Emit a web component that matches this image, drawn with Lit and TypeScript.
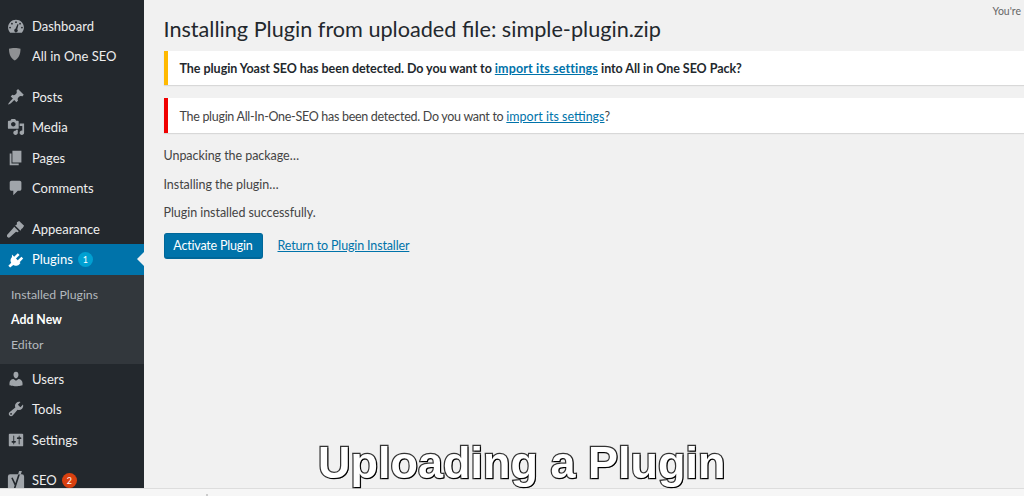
import { LitElement, html, css, svg } from "lit";
import { customElement } from "lit/decorators.js";

const icons: Record<string, any> = {
  dashboard: svg`<path fill-rule="evenodd" d="M3.500 17.500h13c1.400-1.500 2.300-3.600 2.300-5.800C18.800 6.800 14.900 3 10 3S1.200 6.800 1.200 11.700c0 2.200.9 4.300 2.300 5.800zM10 4.800a1 1 0 1 1 0 2 1 1 0 0 1 0-2zM5.500 6.400a1 1 0 1 1 0 2 1 1 0 0 1 0-2zM14.500 6.400a1 1 0 1 1 0 2 1 1 0 0 1 0-2zM3.400 10.800a1 1 0 1 1 0 2 1 1 0 0 1 0-2zM16.600 10.800a1 1 0 1 1 0 2 1 1 0 0 1 0-2zM11.800 7.800l1 .4-1.400 5.400a2 2 0 1 1-2-.5z"/>`,
  shield: svg`<path fill="#8f9193" d="M8.600 1c2.600 0 4.800.3 6.400 1 0 5.500-1.500 10.500-6.400 13C3.700 12.500 2.200 7.500 2.200 2c1.600-.7 3.800-1 6.400-1z"/>`,
  pin: svg`<path d="M10.440 3.020l1.820-1.820 6.360 6.350-1.830 1.820c-1.050-.68-2.480-.57-3.410.36l-.75.75c-.92.93-1.040 2.350-.35 3.410l-1.830 1.820-2.410-2.410-2.800 2.790c-.42.42-3.380 2.710-3.800 2.290s1.860-3.390 2.280-3.810l2.790-2.790L4.100 9.360l1.830-1.820c1.050.69 2.480.57 3.400-.36l.75-.75c.93-.92 1.050-2.350.36-3.410z"/>`,
  media: svg`<path fill-rule="evenodd" d="M13 11V4c0-.55-.45-1-1-1h-1.670L9 1H5L3.670 3H2c-.55 0-1 .45-1 1v7c0 .55.45 1 1 1h10c.55 0 1-.45 1-1zM7 4.500c1.380 0 2.500 1.120 2.500 2.500S8.380 9.500 7 9.500 4.500 8.380 4.500 7 5.620 4.500 7 4.500zM14 6h5v10.500c0 1.380-1.120 2.500-2.500 2.500S14 17.880 14 16.500s1.120-2.500 2.500-2.500c.17 0 .34.020.5.050V9h-3V6zm-4 8.050V13h2v3.500c0 1.380-1.120 2.500-2.500 2.500S7 17.880 7 16.500 8.120 14 9.500 14c.17 0 .34.020.5.050z"/>`,
  pages: svg`<path d="M6 15V2h10v13H6zm-1 1h8v2H3V5h2v11z"/>`,
  comments: svg`<path d="M5 2h9c1.100 0 2 .9 2 2v7c0 1.100-.9 2-2 2h-2l-5 5v-5H5c-1.100 0-2-.9-2-2V4c0-1.100.9-2 2-2z"/>`,
  brush: svg`<path d="M11 2.500L13.500 1l5.500 5.500-1.500 2.500-1.500 1-1 2-6-6 2-1zM8 7.500l5 5-1 1-2-.5-6.500 6a1.500 1.500 0 0 1-3-3l6-6.500z"/>`,
  plug: svg`<path d="M5.500 5l9.500 9.500-1.500 1.500c-2.300 2-5 2-6.500.8l-3.500 2.700-2-2 3.200-3.200c-1.200-1.500-1.200-4.200.8-6.500zM8 7.500l4-4 2 2-4 4zM12 11.500l4-4 2 2-4 4z"/>`,
  user: svg`<path d="M10 9.250c-2.270 0-2.730-3.440-2.730-3.440C7 4.020 7.820 2 9.970 2c2.160 0 2.980 2.020 2.710 3.810 0 0-.41 3.440-2.680 3.440zm0 2.570L12.720 10c2.390 0 4.520 2.330 4.520 4.530v2.490s-3.650 1.130-7.240 1.130c-3.650 0-7.240-1.130-7.240-1.130v-2.490c0-2.250 1.940-4.480 4.470-4.480z"/>`,
  tools: svg`<path fill-rule="evenodd" d="M16.680 9.770c-1.340 1.340-3.300 1.670-4.950.99l-5.410 6.520c-.99.990-2.590.990-3.580 0s-.99-2.590 0-3.570l6.520-5.420c-.68-1.650-.35-3.610.99-4.950 1.280-1.280 3.120-1.620 4.720-1.060l-2.890 2.890 2.820 2.820 2.860-2.870c.53 1.580.18 3.390-1.080 4.650zM3.810 16.210c.4.390 1.040.390 1.430 0 .4-.4.400-1.040 0-1.430-.39-.4-1.030-.4-1.430 0-.39.390-.39 1.030 0 1.430z"/>`,
  settings: svg`<path fill-rule="evenodd" d="M18 16V4c0-.55-.45-1-1-1H3c-.55 0-1 .45-1 1v12c0 .55.45 1 1 1h14c.55 0 1-.45 1-1zM8 11h1c.55 0 1 .45 1 1s-.45 1-1 1H8v1.500c0 .28-.22.5-.5.5s-.5-.22-.5-.5V13H6c-.55 0-1-.45-1-1s.45-1 1-1h1V5.500c0-.28.22-.5.5-.5s.5.22.5.5V11zm5-2h-1c-.55 0-1-.45-1-1s.45-1 1-1h1V5.500c0-.28.22-.5.5-.5s.5.22.5.5V7h1c.55 0 1 .45 1 1s-.45 1-1 1h-1v5.500c0 .28-.22.5-.5.5s-.5-.22-.5-.5V9z"/>`,
  yoast: svg`<path d="M3.500 3.500h13a2.500 2.500 0 0 1 2.500 2.500v14H1V6a2.500 2.500 0 0 1 2.500-2.500z"/><path d="M5.500 7.500l4 8.500M14 2L8.500 19" fill="none" stroke="#23282d" stroke-width="1.800"/><path d="M13.500 0h3l-1.200 4h-3z"/>`,
};

type Item = { label: string; icon: string; sep?: boolean; badge?: string; badgeColor?: string; current?: boolean };

const items: Item[] = [
  { label: "Dashboard", icon: "dashboard" },
  { label: "All in One SEO", icon: "shield" },
  { label: "Posts", icon: "pin", sep: true },
  { label: "Media", icon: "media" },
  { label: "Pages", icon: "pages" },
  { label: "Comments", icon: "comments" },
  { label: "Appearance", icon: "brush", sep: true },
  { label: "Plugins", icon: "plug", badge: "1", badgeColor: "blue", current: true },
  { label: "Users", icon: "user" },
  { label: "Tools", icon: "tools" },
  { label: "Settings", icon: "settings" },
  { label: "SEO", icon: "yoast", sep: true, badge: "2", badgeColor: "red" },
];

@customElement("app-root")
export class AppRoot extends LitElement {
  static styles = css`
    :host {
      display: block;
      width: 1024px;
      height: 496px;
      overflow: hidden;
      position: relative;
      background: #f1f1f1;
      font-family: "Lato", "Open Sans", sans-serif;
      font-size: 12.500px;
      color: #444;
    }
    .page {
      display: flex;
      height: 488px;
      overflow: hidden;
    }
    .side {
      width: 143.500px;
      flex: none;
      background: #23282d;
      padding-top: 10.500px;
      box-sizing: border-box;
      overflow: hidden;
      font-size: 13px;
    }
    .row {
      display: flex;
      align-items: center;
      height: 30.500px;
      color: #eee;
      position: relative;
    }
    .row.sep {
      margin-top: 10px;
    }
    .row.current {
      background: #0073aa;
      color: #fff;
    }
    .row.current::after {
      content: "";
      position: absolute;
      right: 0;
      top: 8px;
      border: 7px solid transparent;
      border-right-color: #f1f1f1;
      border-left-width: 0;
    }
    .icon {
      width: 18px;
      height: 18px;
      margin: 0 7px 0 7px;
      fill: #a0a5aa;
      flex: none;
    }
    .current .icon {
      fill: #fff;
    }
    .badge {
      width: 15px;
      height: 15px;
      border-radius: 50%;
      margin-left: 5px;
      color: #fff;
      font-size: 9px;
      display: flex;
      align-items: center;
      justify-content: center;
    }
    .blue {
      background: #00a0d2;
    }
    .red {
      background: #d9400f;
    }
    .sub {
      background: #32373c;
      height: 89px;
      padding-top: 7px;
      box-sizing: border-box;
      color: #b4b9be;
      font-size: 12.300px;
    }
    .sub div {
      height: 25px;
      line-height: 25px;
      padding-left: 11px;
    }
    .sub .on {
      color: #fff;
      font-weight: 700;
    }
    main {
      flex: 1;
      min-width: 0;
      position: relative;
      padding: 0 0 0 20px;
    }
    .you {
      position: absolute;
      left: 849px;
      top: 5px;
      font-size: 10.500px;
      color: #666;
    }
    h1 {
      margin: 0;
      padding-top: 17px;
      height: 34px;
      font-size: 21.650px;
      line-height: 25px;
      font-weight: 400;
      color: #23282d;
    }
    .notice {
      height: 34px;
      background: #fff;
      border-left: 4px solid;
      box-shadow: 0 1px 1px rgba(0, 0, 0, 0.1);
      padding-left: 12px;
      display: flex;
      align-items: center;
      color: #444;
      white-space: pre;
    }
    .notice.y {
      border-color: #ffb900;
      font-weight: 700;
      color: #23282d;
      margin-bottom: 13px;
      letter-spacing: -0.040px;
    }
    .notice.y a {
      letter-spacing: 0.150px;
    }
    .notice.r {
      border-color: #f00000;
      height: 35px;
      padding-top: 1px;
      box-sizing: border-box;
      margin-bottom: 14px;
      letter-spacing: -0.290px;
    }
    .notice.r a {
      letter-spacing: 0;
    }
    a {
      color: #0073aa;
      text-decoration: underline;
    }
    p {
      margin: 0 0 11.500px;
      line-height: 17px;
      height: 17px;
      letter-spacing: -0.050px;
    }
    .actions {
      display: flex;
      align-items: center;
      gap: 15px;
    }
    .actions a {
      letter-spacing: -0.140px;
      padding-bottom: 1px;
    }
    .btn {
      width: 99px;
      height: 26px;
      box-sizing: border-box;
      background: #0073aa;
      border: 1px solid #006799;
      border-bottom-width: 2px;
      border-radius: 3px;
      color: #fff;
      display: flex;
      align-items: center;
      justify-content: center;
      letter-spacing: -0.2px;
    }
    .bar {
      height: 8px;
      background: #f6f6f6;
      border-top: 1px solid #ddd;
      box-sizing: border-box;
      position: relative;
    }
    .bar::after {
      content: "";
      position: absolute;
      left: 206px;
      bottom: 0;
      width: 2px;
      height: 2px;
      background: #ccc;
    }
    .caption {
      position: absolute;
      left: 318px;
      top: 436px;
      font-family: "Liberation Sans", Arial, sans-serif;
      font-weight: 700;
      font-size: 45px;
      line-height: 54px;
      color: #fff;
      white-space: nowrap;
      -webkit-text-stroke: 2.500px #333;
      paint-order: stroke fill;
      text-shadow: 1px 1px 0 #000;
      will-change: transform;
    }
  `;

  private renderRow(i: Item) {
    return html`<div class="row ${i.sep ? "sep" : ""} ${i.current ? "current" : ""}">
      <svg class="icon" viewBox="0 0 20 20">${icons[i.icon]}</svg>
      <span>${i.label}</span>
      ${i.badge ? html`<span class="badge ${i.badgeColor}">${i.badge}</span>` : ""}
    </div>`;
  }

  render() {
    return html`
      <div class="page">
        <nav class="side">
          ${items.map(
            (i) => html`${this.renderRow(i)}
            ${i.current
              ? html`<div class="sub">
                  <div>Installed Plugins</div>
                  <div class="on">Add New</div>
                  <div>Editor</div>
                </div>`
              : ""}`
          )}
        </nav>
        <main>
          <div class="you">You're</div>
          <h1>Installing Plugin from uploaded file: simple-plugin.zip</h1>
          <div class="notice y">The plugin Yoast SEO has been detected. Do you want to <a>import its settings</a> into All in One SEO Pack?</div>
          <div class="notice r">The plugin All-In-One-SEO has been detected. Do you want to <a>import its settings</a>?</div>
          <p>Unpacking the package…</p>
          <p>Installing the plugin…</p>
          <p>Plugin installed successfully.</p>
          <div class="actions">
            <span class="btn">Activate Plugin</span>
            <a>Return to Plugin Installer</a>
          </div>
        </main>
      </div>
      <div class="bar"></div>
      <div class="caption">Uploading a Plugin</div>
    `;
  }
}
